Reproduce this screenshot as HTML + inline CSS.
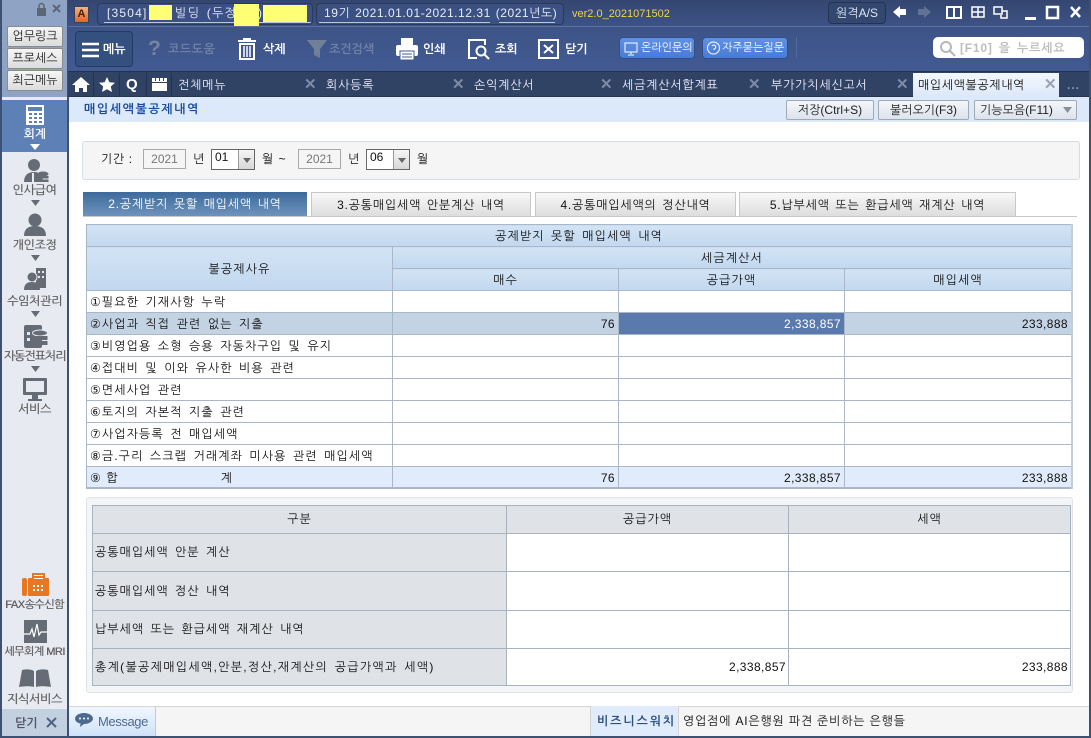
<!DOCTYPE html>
<html lang="ko"><head><meta charset="utf-8"><title>매입세액불공제내역</title>
<style>
*{box-sizing:border-box}
html,body{margin:0;padding:0;width:1091px;height:738px;overflow:hidden;background:#fff}
body{position:relative;font-family:"Liberation Sans","WenQuanYi Zen Hei","NanumGothic",sans-serif;font-size:12px;color:#111}
.a{position:absolute;white-space:nowrap}
.t{position:absolute;white-space:nowrap;line-height:14px}
.side{left:2px;width:65px;text-align:center;color:#5f5f5f;font-size:12px;font-weight:normal;text-shadow:.4px 0 #777;letter-spacing:-.3px}
.sb{left:7px;width:56px;height:21px;background:linear-gradient(#f6f6f6,#dcdcdc);border:1px solid #8b8b8b;border-radius:2px;text-align:center;line-height:19px;color:#222;font-size:12px}
.tb{color:#fff;font-weight:bold;font-size:12px;top:41px;line-height:16px}
.dim{color:#6f80a6}
.tab{top:77px;color:#eef;font-size:12px;letter-spacing:.8px;line-height:16px}
.x{top:77px;color:#7d8ba8;font-size:15px;font-weight:bold;line-height:16px}
.btn{top:100px;height:20px;background:linear-gradient(#f4f6f9,#dde3ec);border:1px solid #a3a9b2;border-radius:2px;text-align:center;line-height:18px;font-size:12px;color:#222}
.st{top:192px;height:25px;background:linear-gradient(#f8f8f8,#dcdcdc);border:1px solid #c8c8c8;border-bottom:none;text-align:center;line-height:24px;letter-spacing:.8px;word-spacing:1.5px;font-size:12px}
.in{height:20px;border:1px solid #a9a9a9;color:#777;text-align:center;line-height:18px;font-size:12px;background:#f5f5f5}
.sel{height:21px;width:44px;border:1px solid #666;background:#fff;line-height:15px;padding-left:3px;font-size:12px}
.sel i{position:absolute;right:0;top:0;width:16px;height:19px;background:linear-gradient(#f5f5f5,#d8d8d8);border-left:1px solid #999}
.sel i:after{content:"";position:absolute;left:4px;top:8px;border:4px solid transparent;border-top:5px solid #666}
table{position:absolute;border-collapse:collapse;table-layout:fixed;font-size:12px}
td{border:1px solid #a9b7c9;padding:0 3px;white-space:nowrap;overflow:hidden;letter-spacing:1.1px;word-spacing:2px}
.m td{height:22px;line-height:14px}
.h{background:linear-gradient(#d2e3f5,#c2d8ef);text-align:center}
td.r{text-align:right;letter-spacing:.4px;padding-right:3px}
.sel2 td{background:#c3d3e3}
td.cur{background:#5a7aae;color:#fff}
.tot td{background:#e0ecfb}
.g td{border-color:#a9b3c0;letter-spacing:1px;word-spacing:2px}
.g td.r{letter-spacing:.4px;padding-right:2px}
.g .q{background:#dfe2e7;padding-left:2px}
.g .c{background:#dfe2e7;text-align:center}
</style></head><body>

<!-- frame -->
<div class="a" style="left:0;top:0;width:1091px;height:738px;background:#3f5172"></div>
<div class="a" style="left:68px;top:0;width:1021px;height:26px;background:linear-gradient(#34466f,#3d5386)"></div>
<div class="a" style="left:68px;top:26px;width:1021px;height:46px;background:linear-gradient(#3e5487,#415a92);border-top:1px solid #5970a0;border-bottom:1px solid #25324f"></div>
<div class="a" style="left:68px;top:72px;width:1021px;height:25px;background:#304365;border-bottom:1px solid #26364f"></div>

<!-- sidebar -->
<div class="a" style="left:2px;top:0;width:65px;height:97px;background:#8fa3c5"></div>
<div class="a" style="left:2px;top:97px;width:65px;height:612px;background:#e7eaf0"></div>
<div class="a" style="left:2px;top:100px;width:65px;height:52px;background:#5d80b6"></div>
<div class="a" style="left:2px;top:709px;width:65px;height:27px;background:#c2d0df"></div>
<svg class="a" style="left:35px;top:2px" width="30" height="14"><rect x="2" y="6" width="9" height="8" fill="#5d6675"/><path d="M4 6V4a2.500 2.500 0 0 1 5 0v2" fill="none" stroke="#5d6675" stroke-width="1.500"/><path d="M18 3l7 7M25 3l-7 7" stroke="#5d6675" stroke-width="2"/></svg>
<div class="a sb" style="top:26px">업무링크</div>
<div class="a sb" style="top:48px">프로세스</div>
<div class="a sb" style="top:70px">최근메뉴</div>

<svg class="a" style="left:26px;top:105px" width="18" height="20"><rect width="18" height="20" fill="#fff"/><rect x="2" y="2" width="14" height="4" fill="#5d80b6"/><g fill="#5d80b6"><rect x="3" y="8" width="3" height="2"/><rect x="8" y="8" width="3" height="2"/><rect x="13" y="8" width="3" height="2"/><rect x="3" y="12" width="3" height="2"/><rect x="8" y="12" width="3" height="2"/><rect x="13" y="12" width="3" height="2"/><rect x="3" y="16" width="3" height="2"/><rect x="8" y="16" width="3" height="2"/><rect x="13" y="16" width="3" height="2"/></g></svg>
<div class="t side" style="top:127px;color:#fff;text-shadow:.4px 0 #fff">회계</div>
<svg class="a" style="left:30px;top:144px" width="10" height="6"><path d="M0 0h10L5 6z" fill="#fff"/></svg>

<svg class="a" style="left:23px;top:158px" width="26" height="25"><circle cx="11" cy="7" r="6" fill="#666c75"/><path d="M1 24c0-7 4-10 10-10s9 3 9 10z" fill="#666c75"/><rect x="9" y="15" width="2" height="9" fill="#e7eaf0"/><ellipse cx="20" cy="16" rx="5.500" ry="2.500" fill="#666c75"/><rect x="14.500" y="18" width="11" height="2.500" fill="#666c75"/><rect x="14.500" y="21.500" width="11" height="2.500" fill="#666c75"/></svg>
<div class="t side" style="top:183px">인사급여</div>
<svg class="a" style="left:31px;top:200px" width="9" height="6"><path d="M0 0h9L4.500 6z" fill="#666c75"/></svg>

<svg class="a" style="left:23px;top:213px" width="24" height="24"><circle cx="12" cy="7" r="6.500" fill="#666c75"/><path d="M1 23c0-7 4-10 11-10s11 3 11 10z" fill="#666c75"/></svg>
<div class="t side" style="top:238px">개인조정</div>
<svg class="a" style="left:31px;top:255px" width="9" height="6"><path d="M0 0h9L4.500 6z" fill="#666c75"/></svg>

<svg class="a" style="left:23px;top:268px" width="24" height="24"><rect x="13" y="0" width="10" height="20" fill="#666c75"/><g fill="#e7eaf0"><rect x="15" y="3" width="2" height="2"/><rect x="19" y="3" width="2" height="2"/><rect x="15" y="8" width="2" height="2"/><rect x="19" y="8" width="2" height="2"/></g><circle cx="9" cy="9" r="5" stroke="#e7eaf0" fill="#666c75"/><path d="M1 22c0-6 3-8 8-8s8 2 8 8z" fill="#666c75"/></svg>
<div class="t side" style="top:294px">수임처관리</div>
<svg class="a" style="left:31px;top:311px" width="9" height="6"><path d="M0 0h9L4.500 6z" fill="#666c75"/></svg>

<svg class="a" style="left:24px;top:324px" width="24" height="24"><rect x="0" y="1" width="18" height="23" rx="2" fill="#666c75"/><g fill="#e7eaf0"><rect x="3" y="8" width="3" height="3"/><rect x="3" y="14" width="3" height="3"/></g><ellipse cx="16" cy="9" rx="7.500" ry="3" fill="#666c75" stroke="#e7eaf0"/><rect x="8.500" y="12" width="15" height="4" fill="#666c75"/><rect x="8.500" y="17" width="15" height="4" fill="#666c75"/></svg>
<div class="t side" style="top:349px;letter-spacing:-1px">자동전표처리</div>
<svg class="a" style="left:31px;top:366px" width="9" height="6"><path d="M0 0h9L4.500 6z" fill="#666c75"/></svg>

<svg class="a" style="left:23px;top:378px" width="24" height="24"><rect x="0" y="0" width="24" height="17" rx="1" fill="#666c75"/><rect x="3" y="3" width="18" height="11" fill="#e7eaf0"/><rect x="9" y="17" width="6" height="4" fill="#666c75"/><rect x="5" y="21" width="14" height="2" fill="#666c75"/></svg>
<div class="t side" style="top:402px">서비스</div>

<svg class="a" style="left:22px;top:573px" width="27" height="24"><rect x="0" y="5" width="5" height="18" rx="2" fill="#e87722"/><rect x="6" y="5" width="21" height="18" rx="1" fill="#e87722"/><rect x="10" y="0" width="13" height="9" fill="#e87722"/><g fill="#fff"><rect x="12" y="2" width="9" height="1"/><rect x="12" y="5" width="9" height="1"/><rect x="11" y="12" width="2" height="2"/><rect x="15" y="12" width="2" height="2"/><rect x="19" y="12" width="2" height="2"/><rect x="11" y="16" width="2" height="2"/><rect x="15" y="16" width="2" height="2"/><rect x="19" y="16" width="2" height="2"/></g></svg>
<div class="t side" style="top:598px;font-size:11px;letter-spacing:-.5px">FAX송수신함</div>
<svg class="a" style="left:24px;top:620px" width="23" height="23"><rect width="23" height="23" fill="#666c75"/><path d="M0 14h6l2-5 2 8 3-13 2 11 2-3h6" fill="none" stroke="#fff" stroke-width="1.200"/></svg>
<div class="t side" style="top:645px;font-size:11px;letter-spacing:-.5px">세무회계 MRI</div>
<svg class="a" style="left:19px;top:669px" width="32" height="18"><path d="M3 1c4-1 9-1 12 1v16c-3-1-9-1-15 0zM29 1c-4-1-9-1-12 1v16c3-1 9-1 15 0z" fill="#666c75"/></svg>
<div class="t side" style="top:692px">지식서비스</div>
<div class="t" style="left:15px;top:716px;color:#556;font-weight:bold">닫기</div>
<svg class="a" style="left:46px;top:717px" width="11" height="11"><path d="M1 1l9 9M10 1l-9 9" stroke="#4f6485" stroke-width="2"/></svg>

<!-- title bar -->
<div class="a" style="left:74px;top:6px;width:15px;height:17px;background:linear-gradient(#f6b27c,#d9682c);border:1px solid #32425f;font-weight:bold;font-size:11px;line-height:15px;text-align:center;color:#40220f">A</div>
<div class="a" style="left:97px;top:3px;width:216px;height:22px;background:#3b5183;border:1px solid #293a5c;border-radius:4px"></div>
<div class="a" style="left:104px;top:22px;width:207px;height:1px;background:#b9c6dc"></div>
<div class="t" style="left:107px;top:6px;color:#e8ecf6;letter-spacing:1.200px">[3504]</div>
<div class="a" style="left:149px;top:5px;width:23px;height:15px;background:#ffff75"></div>
<div class="t" style="left:175px;top:6px;color:#e8ecf6;letter-spacing:1.300px;word-spacing:2px">빌딩 (두정</div>
<div class="a" style="left:234px;top:4px;width:25px;height:22px;background:#ffff75"></div>
<div class="a" style="left:259px;top:5px;width:4px;height:17px;background:#3b5183"></div>
<div class="t" style="left:258px;top:6px;color:#e8ecf6">)</div>
<div class="a" style="left:263px;top:5px;width:44px;height:17px;background:#ffff75"></div>
<div class="a" style="left:316px;top:3px;width:248px;height:22px;background:#3b5183;border:1px solid #293a5c;border-radius:4px"></div>
<div class="a" style="left:319px;top:22px;width:171px;height:1px;background:#b9c6dc"></div>
<div class="a" style="left:499px;top:22px;width:56px;height:1px;background:#b9c6dc"></div>
<div class="t" style="left:324px;top:6px;color:#e8ecf6;letter-spacing:.55px;word-spacing:1px">19기 2021.01.01-2021.12.31 (2021년도)</div>
<div class="t" style="left:572px;top:7px;color:#f0d24a;font-size:11px">ver2.0_2021071502</div>
<div class="a" style="left:828px;top:2px;width:58px;height:22px;background:#33486e;border:1px solid #243450;border-radius:4px;color:#dfe5f2;text-align:center;line-height:20px;font-size:12px">원격A/S</div>
<svg class="a" style="left:893px;top:4px" width="50" height="16"><path d="M0 8l7-6v3h6v6H7v3z" fill="#fff"/><path d="M38 8l-7-6v3h-6v6h6v3z" fill="#607396"/></svg>
<svg class="a" style="left:945px;top:5px" width="146" height="16"><g fill="none" stroke="#fff" stroke-width="2"><path d="M2 2h7v11H2zM9 2h7v11H9z"/></g><g fill="none" stroke="#fff" stroke-width="1.500"><rect x="27" y="2" width="12" height="10"/><path d="M27 7h12M33 2v10"/><path d="M49 2h8v7h-8zM57 6h5v7h-6v-3"/></g><rect x="80" y="12" width="11" height="3" fill="#fff"/><rect x="102" y="2" width="11" height="11" fill="none" stroke="#fff" stroke-width="2.500"/><path d="M126 2l9 10M135 2l-9 10" stroke="#fff" stroke-width="2.500"/></svg>

<!-- toolbar -->
<div class="a" style="left:75px;top:31px;width:58px;height:36px;background:#33507f;border:1px solid #243a60;border-radius:4px"></div>
<svg class="a" style="left:82px;top:42px" width="18" height="16"><path d="M0 2h17M0 8h17M0 14h17" stroke="#fff" stroke-width="2.500"/></svg>
<div class="t tb" style="left:103px">메뉴</div>
<div class="t" style="left:148px;top:38px;font-size:21px;line-height:22px;font-weight:bold;color:#75859f">?</div>
<div class="t tb dim" style="left:168px;letter-spacing:.6px">코드도움</div>
<svg class="a" style="left:238px;top:38px" width="18" height="22"><path d="M0 3h18M6 3V1h6v2" stroke="#fff" stroke-width="2" fill="none"/><path d="M2 6h14v15H2z" fill="none" stroke="#fff" stroke-width="2"/><path d="M6 8v11M9 8v11M12 8v11" stroke="#fff" stroke-width="1.500"/></svg>
<div class="t tb" style="left:263px">삭제</div>
<svg class="a" style="left:307px;top:39px" width="20" height="20"><path d="M0 1h20l-7 9v9l-6-3v-6z" fill="#708099"/></svg>
<div class="t tb dim" style="left:329px">조건검색</div>
<svg class="a" style="left:396px;top:37px" width="22" height="24"><rect x="5" y="1" width="12" height="7" fill="#fff"/><rect x="0" y="8" width="22" height="11" rx="2" fill="#fff"/><rect x="4" y="14" width="14" height="9" fill="#fff" stroke="#415a92"/><path d="M6 17h10M6 20h10" stroke="#415a92"/></svg>
<div class="t tb" style="left:423px">인쇄</div>
<svg class="a" style="left:467px;top:38px" width="24" height="22"><path d="M10 2H2v18h8" fill="none" stroke="#fff" stroke-width="2"/><path d="M10 2h8v5" fill="none" stroke="#fff" stroke-width="2"/><circle cx="14" cy="13" r="4.500" fill="none" stroke="#fff" stroke-width="2"/><path d="M17 16l5 5" stroke="#fff" stroke-width="2"/></svg>
<div class="t tb" style="left:495px">조회</div>
<svg class="a" style="left:538px;top:39px" width="21" height="20"><rect x="1" y="1" width="19" height="18" fill="none" stroke="#fff" stroke-width="2"/><path d="M6 6l9 8M15 6l-9 8" stroke="#fff" stroke-width="2"/></svg>
<div class="t tb" style="left:565px">닫기</div>
<div class="a" style="left:619px;top:37px;width:76px;height:22px;background:linear-gradient(#5f92e6,#4a7bd3);border:1px solid #314f8c;border-radius:4px"></div>
<svg class="a" style="left:624px;top:42px" width="14" height="14"><rect x="1" y="1" width="12" height="9" fill="none" stroke="#fff"/><path d="M7 10v2M4 13h6" stroke="#fff"/></svg>
<div class="t" style="left:641px;top:41px;color:#fff;font-size:11px">온라인문의</div>
<div class="a" style="left:702px;top:37px;width:86px;height:22px;background:linear-gradient(#5f92e6,#4a7bd3);border:1px solid #314f8c;border-radius:4px"></div>
<svg class="a" style="left:706px;top:41px" width="15" height="15"><circle cx="7.500" cy="7" r="6" fill="none" stroke="#fff"/><path d="M6 5a2 2 0 1 1 2 3v1" fill="none" stroke="#fff"/></svg>
<div class="t" style="left:722px;top:41px;color:#fff;font-size:11px">자주묻는질문</div>
<div class="a" style="left:796px;top:37px;width:1px;height:21px;background:#55699a"></div>
<div class="a" style="left:933px;top:37px;width:151px;height:21px;background:#fff;border-radius:5px"></div>
<svg class="a" style="left:939px;top:40px" width="17" height="17"><circle cx="7" cy="7" r="5" fill="none" stroke="#b4b8be" stroke-width="2"/><path d="M11 11l5 5" stroke="#b4b8be" stroke-width="2"/></svg>
<div class="t" style="left:960px;top:41px;color:#bdbdbd;font-weight:bold;letter-spacing:.8px;word-spacing:2px">[F10] 을 누르세요</div>

<!-- tabs -->
<svg class="a" style="left:72px;top:77px" width="18" height="15"><path d="M9 0L0 8h3v7h4v-4h4v4h4V8h3z" fill="#fff"/></svg>
<div class="a" style="left:93px;top:73px;width:1px;height:23px;background:#223250"></div>
<svg class="a" style="left:99px;top:77px" width="16" height="15"><path d="M8 0l2.400 5.200 5.600.6-4.200 3.700 1.200 5.500L8 12.200 3 15l1.200-5.500L0 5.800l5.600-.6z" fill="#fff"/></svg>
<div class="a" style="left:119px;top:73px;width:1px;height:23px;background:#223250"></div>
<div class="t" style="left:126px;top:76px;color:#fff;font-weight:bold;font-size:15px;line-height:17px">Q</div>
<div class="a" style="left:146px;top:73px;width:1px;height:23px;background:#223250"></div>
<svg class="a" style="left:152px;top:78px" width="15" height="13"><path d="M0 0h3v3h1V0h3v3h1V0h3v3h1V0h3v4H0zM0 5h15v8H0z" fill="#fff"/></svg>
<div class="a" style="left:171px;top:73px;width:1px;height:23px;background:#223250"></div>
<div class="t tab" style="left:178px">전체메뉴</div>
<div class="t x" style="left:304px">✕</div><div class="t tab" style="left:326px">회사등록</div>
<div class="t x" style="left:452px">✕</div><div class="t tab" style="left:474px">손익계산서</div>
<div class="t x" style="left:600px">✕</div><div class="t tab" style="left:622px">세금계산서합계표</div>
<div class="t x" style="left:748px">✕</div><div class="t tab" style="left:771px">부가가치세신고서</div>
<div class="t x" style="left:896px">✕</div>
<div class="a" style="left:913px;top:73px;width:146px;height:24px;background:linear-gradient(#f4f8fd,#dbe8f9)"></div>
<div class="t tab" style="left:918px;color:#111;letter-spacing:.6px">매입세액불공제내역</div>
<div class="t x" style="left:1044px;color:#98a2b1">✕</div>
<div class="t" style="left:1067px;top:78px;color:#8595b0;font-weight:bold;letter-spacing:1px">...</div>

<!-- content -->
<div class="a" style="left:69px;top:97px;width:1020px;height:609px;background:#fff"></div>
<div class="a" style="left:69px;top:97px;width:1020px;height:25px;background:#dce9fb"></div>
<div class="t" style="left:84px;top:102px;color:#1c4d9c;font-weight:bold;letter-spacing:1.600px">매입세액불공제내역</div>
<div class="a btn" style="left:786px;width:88px">저장(Ctrl+S)</div>
<div class="a btn" style="left:878px;width:91px">불러오기(F3)</div>
<div class="a btn" style="left:974px;width:103px;text-align:left;padding-left:5px">기능모음(F11)</div>
<svg class="a" style="left:1063px;top:107px" width="9" height="6"><path d="M0 0h9L4.500 6z" fill="#8a8f98"/></svg>

<div class="a" style="left:82px;top:141px;width:998px;height:39px;background:#f5f5f5;border:1px solid #d5dce8;border-radius:3px"></div>
<div class="t" style="left:101px;top:152px;letter-spacing:.6px">기간 :</div>
<div class="a in" style="left:143px;top:149px;width:43px">2021</div>
<div class="t" style="left:193px;top:152px">년</div>
<div class="a sel" style="left:211px;top:149px">01<i></i></div>
<div class="t" style="left:262px;top:152px;letter-spacing:1px">월 ~</div>
<div class="a in" style="left:298px;top:149px;width:43px">2021</div>
<div class="t" style="left:348px;top:152px">년</div>
<div class="a sel" style="left:366px;top:149px">06<i></i></div>
<div class="t" style="left:417px;top:152px">월</div>

<div class="a" style="left:83px;top:192px;width:224px;height:25px;background:linear-gradient(#3d6a9c,#6f95bd);color:#fff;text-align:center;line-height:24px;letter-spacing:.8px;word-spacing:1.500px">2.공제받지 못할 매입세액 내역</div>
<div class="a st" style="left:311px;width:220px">3.공통매입세액 안분계산 내역</div>
<div class="a st" style="left:535px;width:201px">4.공통매입세액의 정산내역</div>
<div class="a st" style="left:739px;width:277px">5.납부세액 또는 환급세액 재계산 내역</div>
<div class="a" style="left:83px;top:216px;width:994px;height:1px;background:#c8c8c8"></div>

<!-- main table -->
<table class="m" style="left:86px;top:224px;width:985px">
<colgroup><col style="width:306px"><col style="width:226px"><col style="width:226px"><col style="width:227px"></colgroup>
<tr><td class="h" colspan="4">공제받지 못할 매입세액 내역</td></tr>
<tr><td class="h" rowspan="2">불공제사유</td><td class="h" colspan="3">세금계산서</td></tr>
<tr><td class="h">매수</td><td class="h">공급가액</td><td class="h">매입세액</td></tr>
<tr><td>①필요한 기재사항 누락</td><td></td><td></td><td></td></tr>
<tr class="sel2"><td>②사업과 직접 관련 없는 지출</td><td class="r">76</td><td class="r cur">2,338,857</td><td class="r">233,888</td></tr>
<tr><td>③비영업용 소형 승용 자동차구입 및 유지</td><td></td><td></td><td></td></tr>
<tr><td>④접대비 및 이와 유사한 비용 관련</td><td></td><td></td><td></td></tr>
<tr><td>⑤면세사업 관련</td><td></td><td></td><td></td></tr>
<tr><td>⑥토지의 자본적 지출 관련</td><td></td><td></td><td></td></tr>
<tr><td>⑦사업자등록 전 매입세액</td><td></td><td></td><td></td></tr>
<tr><td>⑧금.구리 스크랩 거래계좌 미사용 관련 매입세액</td><td></td><td></td><td></td></tr>
<tr class="tot"><td style="word-spacing:0">⑨ 합<span style="display:inline-block;width:102px"></span>계</td><td class="r">76</td><td class="r">2,338,857</td><td class="r">233,888</td></tr>
</table>
<div class="a" style="left:86px;top:487px;width:986px;height:2px;background:#a9b7c9"></div>
<div class="a" style="left:1071px;top:224px;width:2px;height:265px;background:#c3cedb"></div>

<!-- lower table -->
<div class="a" style="left:86px;top:497px;width:987px;height:196px;background:#f4f5f7;border:1px solid #dfe3e9;border-radius:3px"></div>
<table class="g" style="left:92px;top:505px;width:978px">
<colgroup><col style="width:414px"><col style="width:282px"><col style="width:282px"></colgroup>
<tr style="height:28px"><td class="c">구분</td><td class="c">공급가액</td><td class="c">세액</td></tr>
<tr style="height:38px;background:#fff"><td class="q">공통매입세액 안분 계산</td><td></td><td></td></tr>
<tr style="height:39px;background:#fff"><td class="q">공통매입세액 정산 내역</td><td></td><td></td></tr>
<tr style="height:38px;background:#fff"><td class="q">납부세액 또는 환급세액 재계산 내역</td><td></td><td></td></tr>
<tr style="height:37px;background:#fff"><td class="q" style="letter-spacing:1.300px">총계(불공제매입세액,안분,정산,재계산의 공급가액과 세액)</td><td class="r">2,338,857</td><td class="r">233,888</td></tr>
</table>

<!-- status bar -->
<div class="a" style="left:69px;top:706px;width:1020px;height:30px;background:#f5f5f5;border-top:1px solid #d4d4d4"></div>
<div class="a" style="left:69px;top:707px;width:87px;height:29px;background:linear-gradient(#f2f7fe,#cfe2f9);border-right:1px solid #c8c8c8"></div>
<svg class="a" style="left:75px;top:713px" width="18" height="14"><path d="M9 0c5 0 9 2.500 9 5.500S14 11 9 11L5 14l.5-3.500C2 10 0 8 0 5.500 0 2.500 4 0 9 0z" fill="#4e6a91"/><g fill="#fff"><circle cx="5" cy="5.500" r="1"/><circle cx="9" cy="5.500" r="1"/><circle cx="13" cy="5.500" r="1"/></g></svg>
<div class="t" style="left:98px;top:714px;color:#4e6a91;font-size:13px;line-height:16px;letter-spacing:-.4px">Message</div>
<div class="a" style="left:590px;top:706px;width:89px;height:30px;background:#e0ecfb;border-left:1px solid #d4d4d4;border-right:1px solid #d4d4d4"></div>
<div class="t" style="left:597px;top:714px;color:#2f5181;font-weight:bold;letter-spacing:1.900px">비즈니스워치</div>
<div class="t" style="left:683px;top:714px;letter-spacing:.8px">영업점에 AI은행원 파견 준비하는 은행들</div>
</body></html>
